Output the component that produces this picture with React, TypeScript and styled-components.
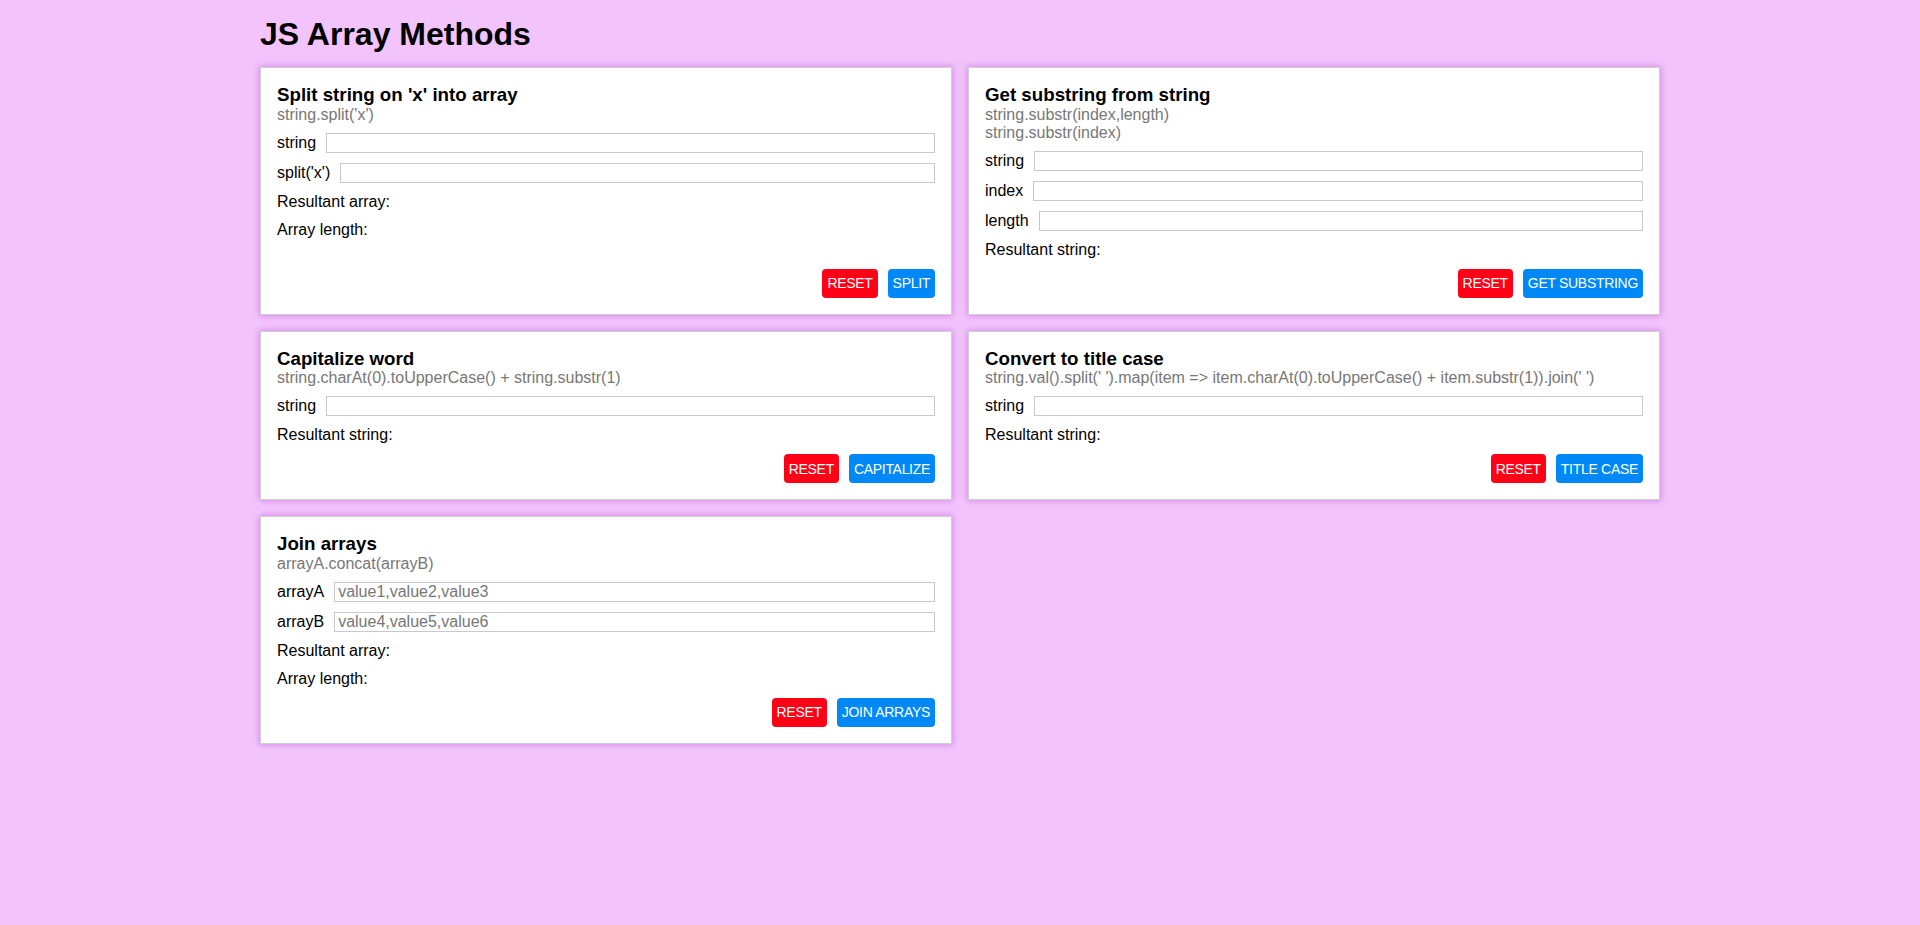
import React from "react";
import styled, { createGlobalStyle } from "styled-components";

const GlobalStyle = createGlobalStyle`
  html, body {
    margin: 0;
    padding: 0;
    background: #f2c4fb;
  }
  body {
    font-family: "Liberation Sans", Arial, Helvetica, sans-serif;
    font-size: 16px;
    color: #000;
  }
  * { box-sizing: border-box; }
`;

const Page = styled.div`
  width: 1400px;
  margin: 0 auto;
  padding-top: 16px;
  min-height: 925px;
`;

const PageTitle = styled.h1`
  margin: 0 0 14px;
  font-size: 32px;
  font-weight: bold;
  line-height: 37px;
`;

const Grid = styled.div`
  display: grid;
  grid-template-columns: 1fr 1fr;
  column-gap: 16px;
  row-gap: 16px;
  align-items: stretch;
`;

const Card = styled.section`
  display: flex;
  flex-direction: column;
  background: #fff;
  border: 1px solid #cfcfcf;
  box-shadow: 0 0 6px 1px rgba(205, 120, 230, 0.75);
  padding: 16px;
`;

const CardTitle = styled.h3`
  margin: 0;
  font-size: 18.72px;
  font-weight: bold;
  line-height: 21.5px;
`;

const Code = styled.div`
  color: #777;
  line-height: 18px;
`;

const Row = styled.label`
  display: flex;
  align-items: center;
  gap: 10px;
  height: 22px;
  margin-top: 8px;
`;

const LabelText = styled.span`
  white-space: nowrap;
  line-height: 18px;
`;

const TextInput = styled.input`
  flex: 1;
  min-width: 0;
  height: 20px;
  padding: 0 3px;
  border: 1px solid #c9c9c9;
  border-radius: 0;
  font-family: "Liberation Sans", Arial, Helvetica, sans-serif;
  font-size: 16px;
  color: #000;
  background: #fff;
  outline: none;
  &::placeholder {
    color: #777;
  }
`;

const Result = styled.div`
  margin-top: 8px;
  height: 20px;
  line-height: 20px;
`;

const Actions = styled.div`
  display: flex;
  justify-content: flex-end;
  gap: 10px;
  margin-top: auto;
  padding-top: 9px;
`;

const Button = styled.button<{ $variant: "reset" | "primary" }>`
  height: 29px;
  padding: 0 5px;
  border: none;
  border-radius: 4px;
  background: ${(p) => (p.$variant === "reset" ? "#ff0016" : "#0089f6")};
  color: #fff;
  font-family: "Liberation Sans", Arial, Helvetica, sans-serif;
  font-size: 14px;
  letter-spacing: -0.3px;
  text-transform: uppercase;
  cursor: pointer;
`;

type Field = { label: string; placeholder?: string };

type Method = {
  title: string;
  code: string[];
  fields: Field[];
  results: string[];
  action: string;
};

const methods: Method[] = [
  {
    title: "Split string on 'x' into array",
    code: ["string.split('x')"],
    fields: [{ label: "string" }, { label: "split('x')" }],
    results: ["Resultant array:", "Array length:"],
    action: "Split",
  },
  {
    title: "Get substring from string",
    code: ["string.substr(index,length)", "string.substr(index)"],
    fields: [{ label: "string" }, { label: "index" }, { label: "length" }],
    results: ["Resultant string:"],
    action: "Get substring",
  },
  {
    title: "Capitalize word",
    code: ["string.charAt(0).toUpperCase() + string.substr(1)"],
    fields: [{ label: "string" }],
    results: ["Resultant string:"],
    action: "Capitalize",
  },
  {
    title: "Convert to title case",
    code: [
      "string.val().split(' ').map(item => item.charAt(0).toUpperCase() + item.substr(1)).join(' ')",
    ],
    fields: [{ label: "string" }],
    results: ["Resultant string:"],
    action: "Title case",
  },
  {
    title: "Join arrays",
    code: ["arrayA.concat(arrayB)"],
    fields: [
      { label: "arrayA", placeholder: "value1,value2,value3" },
      { label: "arrayB", placeholder: "value4,value5,value6" },
    ],
    results: ["Resultant array:", "Array length:"],
    action: "Join arrays",
  },
];

export default function App() {
  return (
    <>
      <GlobalStyle />
      <Page>
        <PageTitle>JS Array Methods</PageTitle>
        <Grid>
          {methods.map((m) => (
            <Card key={m.title}>
              <CardTitle>{m.title}</CardTitle>
              {m.code.map((c) => (
                <Code key={c}>{c}</Code>
              ))}
              {m.fields.map((f) => (
                <Row key={f.label}>
                  <LabelText>{f.label}</LabelText>
                  <TextInput type="text" placeholder={f.placeholder} />
                </Row>
              ))}
              {m.results.map((r) => (
                <Result key={r}>{r}</Result>
              ))}
              <Actions>
                <Button $variant="reset">Reset</Button>
                <Button $variant="primary">{m.action}</Button>
              </Actions>
            </Card>
          ))}
        </Grid>
      </Page>
    </>
  );
}
